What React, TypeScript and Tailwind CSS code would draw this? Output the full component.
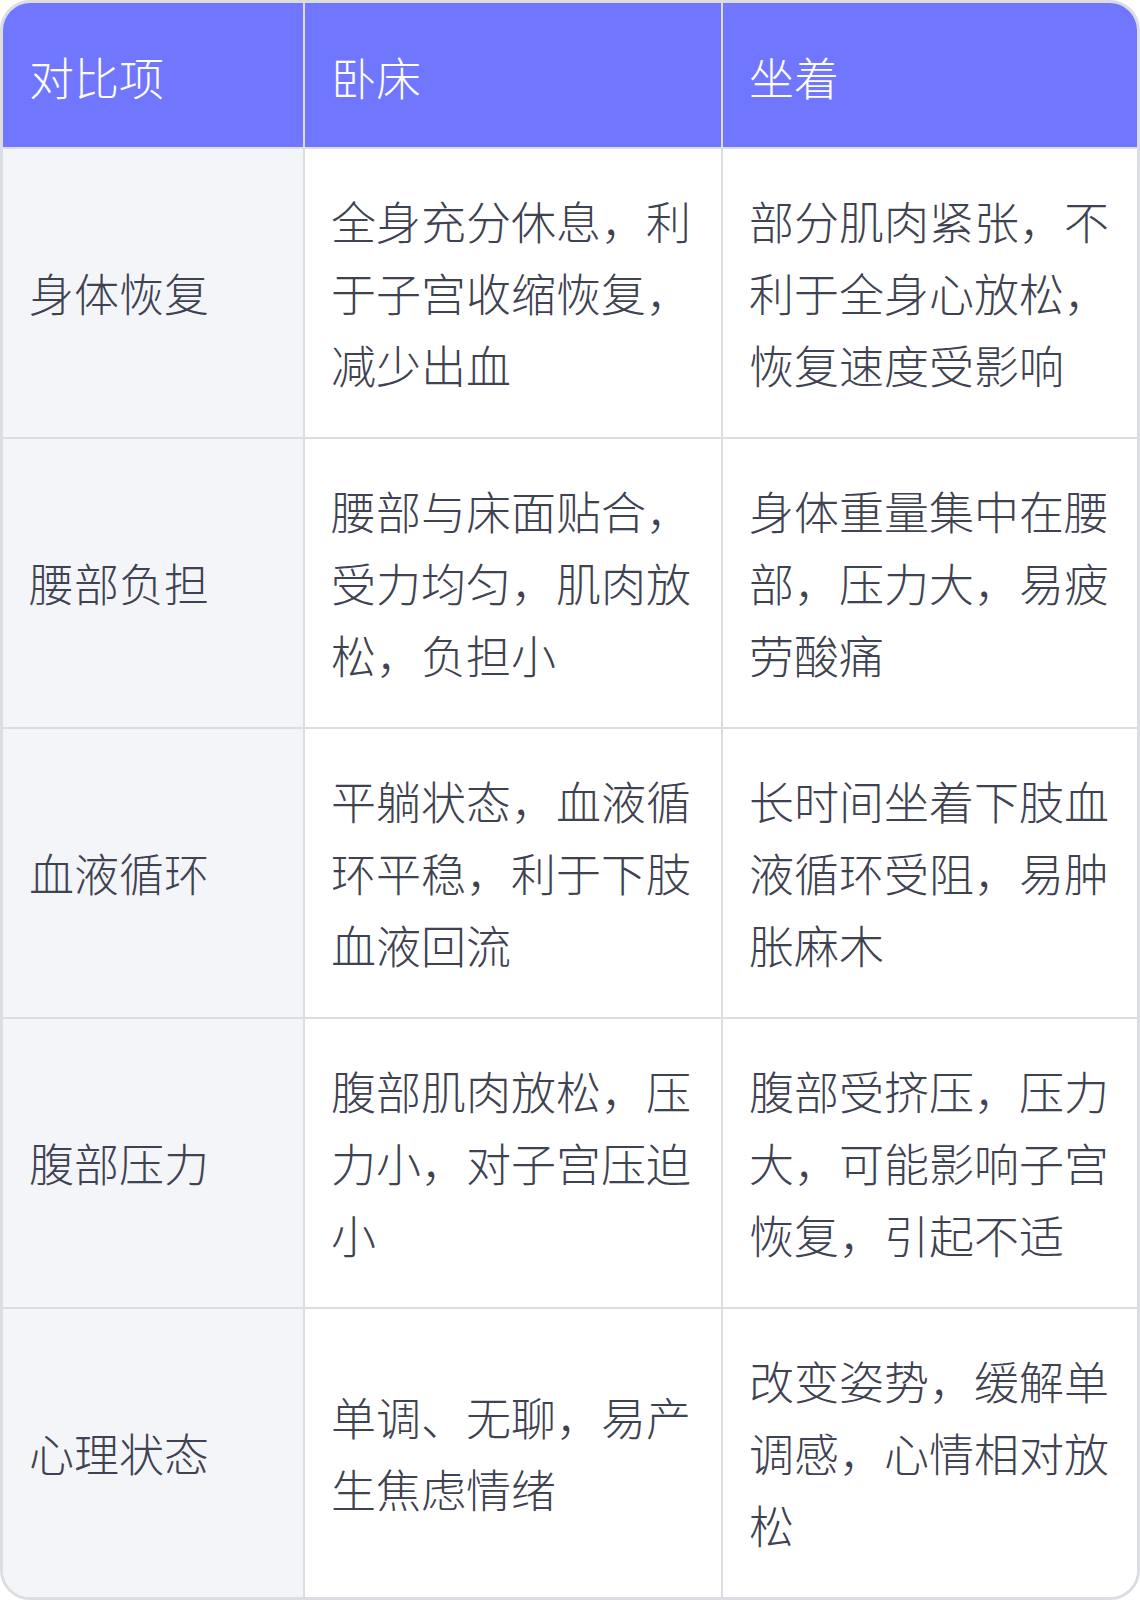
const rows = [
  {
    item: "身体恢复",
    lying: "全身充分休息，利于子宫收缩恢复，减少出血",
    sitting: "部分肌肉紧张，不利于全身心放松，恢复速度受影响",
  },
  {
    item: "腰部负担",
    lying: "腰部与床面贴合，受力均匀，肌肉放松，负担小",
    sitting: "身体重量集中在腰部，压力大，易疲劳酸痛",
  },
  {
    item: "血液循环",
    lying: "平躺状态，血液循环平稳，利于下肢血液回流",
    sitting: "长时间坐着下肢血液循环受阻，易肿胀麻木",
  },
  {
    item: "腹部压力",
    lying: "腹部肌肉放松，压力小，对子宫压迫小",
    sitting: "腹部受挤压，压力大，可能影响子宫恢复，引起不适",
  },
  {
    item: "心理状态",
    lying: "单调、无聊，易产生焦虑情绪",
    sitting: "改变姿势，缓解单调感，心情相对放松",
  },
];

export default function App() {
  return (
    <div
      className="w-[1140px] bg-white"
      style={{ fontFamily: '"Noto Sans CJK SC", "Noto Sans", sans-serif' }}
    >
      <div className="overflow-hidden rounded-[30px] border-[3px] border-[#dcdde2]">
        <table className="w-full table-fixed border-collapse text-[45px] leading-[72px] font-light">
          <colgroup>
            <col className="w-[301px]" />
            <col className="w-[418px]" />
            <col />
          </colgroup>
          <thead>
            <tr className="bg-[#7176ff] text-white">
              <th className="border-r-2 border-b-2 border-[#dcdde2] px-[26px] pt-[38px] pb-[34px] text-left font-light">
                对比项
              </th>
              <th className="border-r-2 border-b-2 border-[#dcdde2] px-[26px] pt-[38px] pb-[34px] text-left font-light">
                卧床
              </th>
              <th className="border-b-2 border-[#dcdde2] px-[26px] pt-[38px] pb-[34px] text-left font-light">
                坐着
              </th>
            </tr>
          </thead>
          <tbody className="text-[#3e4251]">
            {rows.map((r, i) => {
              const last = i === rows.length - 1;
              const bb = last ? "" : "border-b-2";
              return (
                <tr key={r.item} className="h-[288px]">
                  <td className={`${bb} border-r-2 border-[#dcdde2] bg-[#f4f5f9] px-[26px] py-9 align-middle`}>
                    {r.item}
                  </td>
                  <td className={`${bb} border-r-2 border-[#dcdde2] bg-white px-[26px] py-9 align-middle`}>
                    {r.lying}
                  </td>
                  <td className={`${bb} border-[#dcdde2] bg-white px-[26px] py-9 align-middle`}>
                    {r.sitting}
                  </td>
                </tr>
              );
            })}
          </tbody>
        </table>
      </div>
    </div>
  );
}
